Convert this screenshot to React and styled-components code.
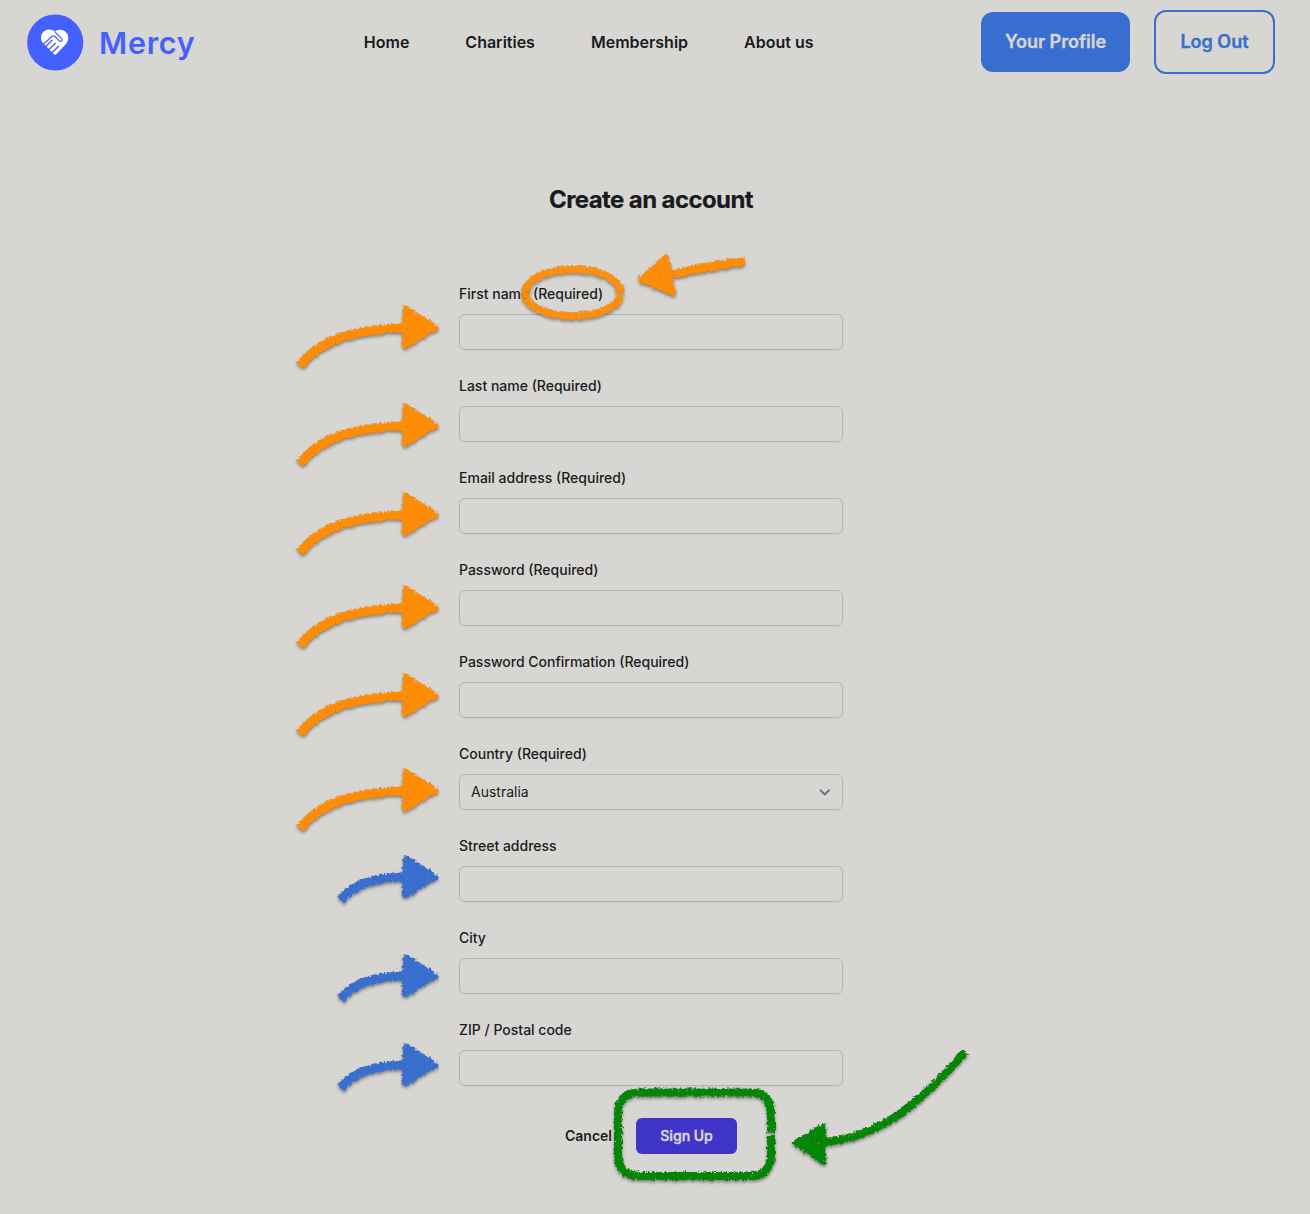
import React from 'react';
import styled, { createGlobalStyle } from 'styled-components';

const GlobalStyle = createGlobalStyle`
  *, *::before, *::after { box-sizing: border-box; }
  body {
    margin: 0;
    background: #d8d6d2;
    color: #181c1f;
    font-family: Inter, "Liberation Sans", sans-serif;
    -webkit-font-smoothing: antialiased;
  }
`;

const Page = styled.div`
  position: relative;
  height: 1214px;
  overflow: hidden;
`;

const Header = styled.header`
  display: flex;
  align-items: center;
  height: 84px;
  padding: 0 35px 0 27px;
`;

const Brand = styled.a`
  display: flex;
  align-items: center;
  gap: 15px;
  width: 336.8px;
`;

const BrandName = styled.span`
  padding-top: 2px;
  font-size: 30.5px;
  font-weight: 600;
  line-height: 40px;
  letter-spacing: 0.75px;
  color: #4460fe;
`;

const Nav = styled.nav`
  display: flex;
  gap: 56px;
`;

const NavLink = styled.a`
  font-size: 16px;
  font-weight: 600;
  line-height: 24px;
`;

const Actions = styled.div`
  display: flex;
  align-items: center;
  gap: 24px;
  margin-left: auto;
`;

const HeaderButton = styled.button`
  width: ${(p) => p.$width}px;
  height: ${(p) => (p.$outline ? 64 : 60)}px;
  padding: 0;
  border: ${(p) => (p.$outline ? '2px solid #386fcf' : '0')};
  border-radius: 12px;
  background: ${(p) => (p.$outline ? 'transparent' : '#386fcf')};
  color: ${(p) => (p.$outline ? '#386fcf' : '#d8d6d2')};
  font: 600 18px/28px Inter, sans-serif;
  -webkit-text-stroke: 0.35px currentColor;
`;

const Main = styled.main`
  display: flex;
  flex-direction: column;
  align-items: center;
  padding: 100px 8px 0 0;
`;

const Title = styled.h1`
  margin: 0;
  font-size: 24px;
  font-weight: 700;
  line-height: 32px;
  letter-spacing: -0.6px;
  -webkit-text-stroke: 0.2px currentColor;
`;

const Form = styled.form`
  display: flex;
  flex-direction: column;
  gap: 24px;
  width: 384px;
  margin-top: 66px;
`;

const Field = styled.div`
  display: flex;
  flex-direction: column;
  gap: 8px;
`;

const Label = styled.label`
  font-size: 14px;
  font-weight: 500;
  line-height: 24px;
`;

const Input = styled.input`
  width: 100%;
  height: 36px;
  padding: 0 11px;
  border: 1px solid #b6b4af;
  border-radius: 6px;
  background: transparent;
  box-shadow: 0 1px 2px rgba(0, 0, 0, 0.05);
`;

const SelectBox = styled.div`
  display: flex;
  align-items: center;
  justify-content: space-between;
  height: 36px;
  padding: 0 7px 0 11px;
  border: 1px solid #b6b4af;
  border-radius: 6px;
  box-shadow: 0 1px 2px rgba(0, 0, 0, 0.05);
  font-size: 14px;
  line-height: 24px;
`;

const FormActions = styled.div`
  display: flex;
  align-items: center;
  justify-content: center;
  gap: 24px;
  margin-top: 8px;
`;

const Cancel = styled.button`
  padding: 0;
  border: 0;
  background: none;
  color: inherit;
  font: 600 14px/24px Inter, sans-serif;
`;

const Submit = styled.button`
  width: 101px;
  height: 36px;
  padding: 0;
  border: 0;
  border-radius: 6px;
  background: #3f35c9;
  color: #d8d6d2;
  font: 600 14px/24px Inter, sans-serif;
  -webkit-text-stroke: 0.3px currentColor;
`;

const Annotations = styled.svg`
  position: absolute;
  inset: 0;
  pointer-events: none;
`;

const ORANGE = '#ff8c05';
const BLUE = '#386fcf';
const GREEN = '#058505';

function Logo() {
  return (
    <svg width="57" height="57" viewBox="0 0 57 57">
      <circle cx="28.2" cy="28.5" r="28.1" fill="#4460fe" />
      <path d="M27.800 17.500c3-2.400 8-2.400 11 .5c3.400 3.300 3.400 8.500.1 12L29.700 39.800a2 2 0 0 1-3 .2L16.500 29.600c-3.300-3.300-3.400-8.200-.2-11.600c3.200-3.200 8-3.200 11.500-.5z" fill="#fff" />
      <g fill="none" stroke="#4460fe" strokeLinecap="round" strokeLinejoin="round">
        <path d="M17 29.800l7.200-6.800c1.500-1.400 2.900-1.400 4.300 0l3.800 3.800c1.600 1.500 3.700-.3 2.300-2.100l-6.600-6.900" strokeWidth="1.200" />
        <path d="M18.200 32.900l6.900-6.700M21.300 36.100l7-6.700M24.700 39l6.700-6.500" strokeWidth="1.400" />
      </g>
    </svg>
  );
}

function FieldArrow({ tipY, optional }) {
  const color = optional ? BLUE : ORANGE;
  return (
    <g transform={`translate(-0.5 ${tipY})`} fill={color} stroke={color} filter="url(#chalk)">
      <path
        d={optional ? 'M341 23.500C354 8 374 1 407 0' : 'M300.500 38.500C321 13 353 2 407 1'}
        fill="none"
        strokeWidth="9"
      />
      <path d="M406-18L435 0.500L406 18Z" strokeWidth="6.500" strokeLinejoin="round" />
    </g>
  );
}

const FIELDS = [
  { label: 'First name (Required)' },
  { label: 'Last name (Required)' },
  { label: 'Email address (Required)', type: 'email' },
  { label: 'Password (Required)', type: 'password' },
  { label: 'Password Confirmation (Required)', type: 'password' },
  { label: 'Country (Required)', value: 'Australia' },
  { label: 'Street address' },
  { label: 'City' },
  { label: 'ZIP / Postal code' },
];

const REQUIRED_TIPS = [327, 425, 514, 607, 695, 790];
const OPTIONAL_TIPS = [876.500, 975.500, 1064.500];

export default function App() {
  return (
    <Page>
      <GlobalStyle />
      <Header>
        <Brand>
          <Logo />
          <BrandName>Mercy</BrandName>
        </Brand>
        <Nav>
          {['Home', 'Charities', 'Membership', 'About us'].map((t) => (
            <NavLink key={t}>{t}</NavLink>
          ))}
        </Nav>
        <Actions>
          <HeaderButton $width={149}>Your Profile</HeaderButton>
          <HeaderButton $width={121} $outline>Log Out</HeaderButton>
        </Actions>
      </Header>
      <Main>
        <Title>Create an account</Title>
        <Form>
          {FIELDS.map((f) => (
            <Field key={f.label}>
              <Label>{f.label}</Label>
              {f.value ? (
                <SelectBox>
                  {f.value}
                  <svg width="20" height="20" viewBox="0 0 20 20" fill="none" stroke="#667085" strokeWidth="1.900" strokeLinecap="round" strokeLinejoin="round">
                    <path d="M5.500 8.200l4.300 4.300l4.300-4.300" />
                  </svg>
                </SelectBox>
              ) : (
                <Input type={f.type || 'text'} />
              )}
            </Field>
          ))}
          <FormActions>
            <Cancel type="button">Cancel</Cancel>
            <Submit type="button">Sign Up</Submit>
          </FormActions>
        </Form>
      </Main>
      <Annotations width="1310" height="1214" viewBox="0 0 1310 1214">
        <defs>
          <filter id="chalk" x="-15%" y="-25%" width="130%" height="160%" colorInterpolationFilters="sRGB">
            <feTurbulence type="fractalNoise" baseFrequency="0.4" numOctaves="2" seed="4" result="noise" />
            <feDisplacementMap in="SourceGraphic" in2="noise" scale="5.5" xChannelSelector="R" yChannelSelector="G" result="rough" />
            <feColorMatrix in="noise" type="matrix" values="0 0 0 0 0  0 0 0 0 0  0 0 0 0 0  0 0 7 0 -0.95" result="grain" />
            <feComposite in="rough" in2="grain" operator="in" result="speckled" />
            <feDropShadow in="speckled" dx="0" dy="2" stdDeviation="1.4" floodColor="#000" floodOpacity="0.4" />
          </filter>
        </defs>
        {REQUIRED_TIPS.map((y) => <FieldArrow key={y} tipY={y} />)}
        {OPTIONAL_TIPS.map((y) => <FieldArrow key={y} tipY={y} optional />)}
        <g stroke={ORANGE} opacity="0.95" filter="url(#chalk)">
          <path d="M620.500 292.500C620 278 599 269.500 573 269.500S525 280 525 293S547 316 573 316S620 306 620.500 294" fill="none" strokeWidth="7.500" />
        </g>
        <g stroke={ORANGE} fill={ORANGE} filter="url(#chalk)">
          <path d="M745 261.500Q706 266 670 275" fill="none" strokeWidth="8.500" />
          <path d="M641 279.500L666 257.500L673 293Z" strokeWidth="5.500" strokeLinejoin="round" />
        </g>
        <g stroke={GREEN} fill="none" strokeWidth="8" filter="url(#chalk)">
          <path d="M771 1132.500V1113Q771 1092.500 750 1092.500H640Q618 1092.500 618 1114V1154Q618 1176 640 1176H750Q771 1176 771 1155V1135" />
        </g>
        <g stroke={GREEN} fill={GREEN} filter="url(#chalk)">
          <path d="M965 1052C920 1104 878 1138 824 1142" fill="none" strokeWidth="8" />
          <path d="M795 1143L824 1125L824 1163Z" strokeWidth="4.500" strokeLinejoin="round" />
        </g>
      </Annotations>
    </Page>
  );
}
